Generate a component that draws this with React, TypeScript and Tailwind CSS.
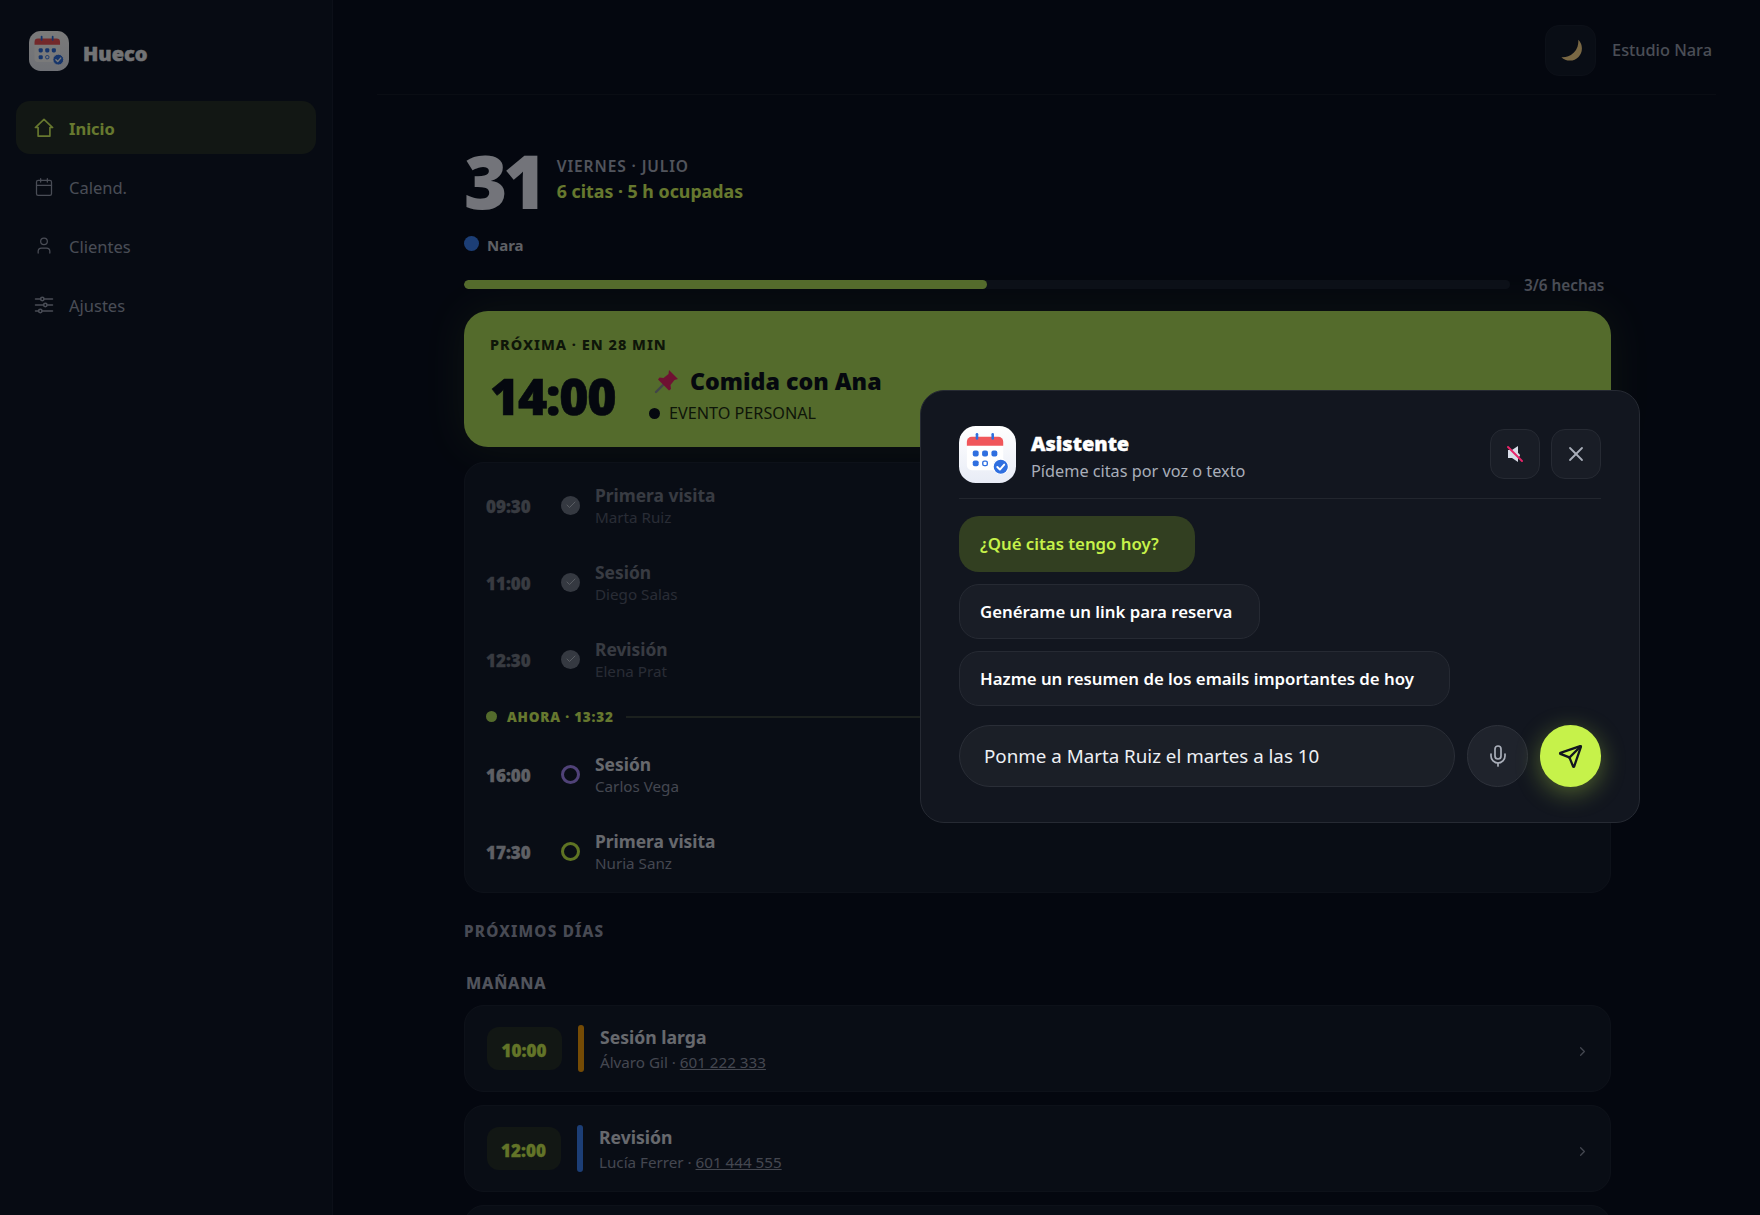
import React from "react";
import { Calendar, User, Mic, Send, X, ChevronRight, Check } from "lucide-react";

function AppIcon({ size }: { size: number }) {
  return (
    <svg width={size} height={size} viewBox="0 0 58 58" fill="none">
      <defs>
        <linearGradient id="ai" x1="0" y1="0" x2="0" y2="1">
          <stop offset="0" stopColor="#ffffff" />
          <stop offset="1" stopColor="#e8ecf6" />
        </linearGradient>
      </defs>
      <rect width="58" height="58" rx="17" fill="url(#ai)" />
      <rect x="8" y="11" width="37" height="34" rx="5" fill="#ffffff" />
      <path d="M8 20v-4a5 5 0 0 1 5-5h27a5 5 0 0 1 5 5v4z" fill="#f0565a" />
      <rect x="17" y="7" width="2.600" height="7" rx="1.300" fill="#2f6fe0" />
      <rect x="33" y="7" width="2.600" height="7" rx="1.300" fill="#2f6fe0" />
      <rect x="14" y="25" width="6" height="6" rx="2" fill="#2f6fe0" />
      <rect x="23.500" y="25" width="6" height="6" rx="2" fill="#2f6fe0" />
      <rect x="33" y="25" width="6" height="6" rx="2" fill="#2f6fe0" />
      <rect x="14" y="35" width="6" height="6" rx="2" fill="#2f6fe0" />
      <rect x="24.200" y="35.700" width="4.600" height="4.600" rx="1.500" stroke="#2f6fe0" strokeWidth="1.400" />
      <circle cx="42.500" cy="41.500" r="7.800" fill="#2f6fe0" stroke="#ffffff" strokeWidth="1.200" />
      <path d="M39 41.700l2.600 2.600 4.400-5" stroke="#fff" strokeWidth="2" strokeLinecap="round" strokeLinejoin="round" />
    </svg>
  );
}

function HomeIcon() {
  return (
    <svg width="22" height="22" viewBox="0 0 22 22" fill="none" stroke="currentColor" strokeWidth="1.800" strokeLinejoin="round" strokeLinecap="round">
      <path d="M1.500 10.500 11 1.500l9.500 9H17.500v9.500h-13v-9.500z" />
    </svg>
  );
}

function SlidersIcon() {
  return (
    <svg width="20" height="20" viewBox="0 0 20 20" fill="none" stroke="currentColor" strokeWidth="1.500" strokeLinecap="round">
      <path d="M1.500 4h5.200M10 4h8.500M1.500 10h8.200M13 10h5.500M1.500 16h3.200M8 16h10.500" />
      <circle cx="8.300" cy="4" r="1.700" />
      <circle cx="11.300" cy="10" r="1.700" />
      <circle cx="6.300" cy="16" r="1.700" />
    </svg>
  );
}

function NavItem({ icon, label, active }: { icon: React.ReactNode; label: string; active?: boolean }) {
  return (
    <div
      className={
        active
          ? "flex h-[53px] items-center gap-[15px] rounded-[14px] bg-[#26302a] pl-[18px] text-[#d8fb62] font-bold"
          : "flex h-[53px] items-center gap-[15px] rounded-[14px] pl-[18px] text-[#9aa1b3]"
      }
    >
      <span className="flex w-[20px] justify-center">{icon}</span>
      <span className="pt-[3px] text-[16.5px]">{label}</span>
    </div>
  );
}

function Row({ time, title, sub, done, ring }: { time: string; title: string; sub: string; done?: boolean; ring?: string }) {
  return (
    <div className="flex h-[77px] items-center">
      <span className={done ? "mt-[-2px] w-[75px] text-[17px] font-black text-[#757b88] [-webkit-text-stroke:0.3px_currentColor]" : "mt-[-2px] w-[75px] text-[17px] font-black text-[#c5c9d4] [-webkit-text-stroke:0.3px_currentColor]"}>{time}</span>
      {done ? (
        <span className="mt-[-5px] flex h-[19px] w-[19px] items-center justify-center rounded-full bg-[#6f7788] text-[#bcc3d0]">
          <Check size={12} strokeWidth={2} />
        </span>
      ) : (
        <span className={ring + " mt-[-5px] h-[19px] w-[19px] rounded-full border-[3px]"} />
      )}
      <div className="ml-[15px] mt-[-6px]">
        <div className={done ? "text-[17.4px] font-bold leading-[24px] text-[#767c8b]" : "text-[17.4px] font-bold leading-[24px] text-[#d8dbe4]"}>{title}</div>
        <div className={done ? "text-[15.2px] leading-[20px] text-[#565d70]" : "text-[15.2px] leading-[20px] text-[#8f95a8]"}>{sub}</div>
      </div>
    </div>
  );
}

function DayCard({ time, bar, title, name, phone, pill }: { time: string; bar: string; title: string; name: string; phone: string; pill: string }) {
  return (
    <div className="flex h-[87px] items-center rounded-[20px] border border-[#1d2536] bg-[#141c2d] pl-[22px] pr-[20px]">
      <span className={pill + " flex h-[43px] items-center justify-center rounded-[12px] bg-[#26302a] pr-[1px] pt-[4px] text-[17px] font-black text-[#d0f255] [-webkit-text-stroke:0.3px_currentColor]"}>{time}</span>
      <span className={bar + " ml-[16px] h-[47px] w-[6px] rounded-full"} />
      <div className="ml-[16px] flex-1">
        <div className="text-[17.6px] font-bold leading-[25px] text-[#d8dbe4]">{title}</div>
        <div className="mt-[1px] text-[15.2px] leading-[22px] text-[#8f95a8]">
          {name} · <span className="underline">{phone}</span>
        </div>
      </div>
      <ChevronRight size={15} className="mt-[5px] text-[#8f95a8]" />
    </div>
  );
}

export default function App() {
  return (
    <div className="relative flex h-screen w-full overflow-hidden bg-[#0a1020] font-['Noto_Sans','Open_Sans',sans-serif] text-white">
      <aside className="w-[333px] shrink-0 border-r border-[#192132] bg-[#0f1728] px-[16px]">
        <div className="flex h-[101px] items-center gap-[14px] pl-[13px]">
          <AppIcon size={40} />
          <span className="mt-[6px] text-[20px] font-black text-[#eef0f5] [-webkit-text-stroke:0.5px_currentColor]">Hueco</span>
        </div>
        <nav className="flex flex-col gap-[6px]">
          <NavItem active label="Inicio" icon={<HomeIcon />} />
          <NavItem label="Calend." icon={<Calendar size={22} strokeWidth={1.5} />} />
          <NavItem label="Clientes" icon={<User size={23} strokeWidth={1.5} />} />
          <NavItem label="Ajustes" icon={<SlidersIcon />} />
        </nav>
      </aside>

      <main className="min-w-0 flex-1 px-[44px]">
        <header className="flex h-[95px] items-center justify-end gap-[16px] border-b border-[#151c2b] pt-[6px] pr-[4px]">
          <span className="flex h-[51px] w-[51px] items-center justify-center rounded-[14px] border border-[#1a2232] bg-[#141c2d]">
            <svg width="24" height="24" viewBox="0 0 20 20">
              <path d="M16 1.500A10 10 0 0 1 2 16 13 13 0 0 0 16 1.500z" fill="#ffd98f" />
            </svg>
          </span>
          <span className="mt-[1px] text-[16.300px] font-medium text-[#9ca2b4]">Estudio Nara</span>
        </header>

        <div className="ml-[87px] w-[1147px]">
          <div className="box-content flex h-[95px] items-center pt-[40px]">
            <span className="mt-[-3px] text-[74px] font-black leading-none tracking-[-4px] text-[#f0f3ff]">31</span>
            <div className="ml-[14px] mt-[-8px]">
              <div className="text-[15.5px] font-semibold leading-[24px] tracking-[0.9px] text-[#aab0c0]">VIERNES · JULIO</div>
              <div className="text-[17.800px] font-bold leading-[26px] text-[#d8fb62]">6 citas · 5 h ocupadas</div>
            </div>
          </div>
          <div className="mt-[3px] flex h-[24px] items-center">
            <span className="mt-[-3px] h-[15px] w-[15px] rounded-full bg-[#3b82f6]" />
            <span className="ml-[8px] text-[15px] font-bold text-[#c5c9d4]">Nara</span>
          </div>
          <div className="mt-[23px] flex h-[9px] items-center">
            <div className="h-[9px] w-[1046px] overflow-hidden rounded-full bg-[#1a2333]">
              <div className="h-full w-[523px] rounded-full bg-[#afdf5c]" />
            </div>
            <span className="ml-[14px] mt-[2px] text-[15.300px] font-semibold text-[#9ca2b4]">3/6 hechas</span>
          </div>

          <section className="mt-[22px] h-[136px] rounded-[24px] bg-[#afdf5c] pl-[26px] pt-[22px] shadow-[0_0_40px_rgba(175,223,92,0.12)]">
            <div className="text-[14.5px] font-extrabold leading-[22px] tracking-[1px] text-[#1f2f14]">PRÓXIMA · EN 28 MIN</div>
            <div className="mt-[6px] flex">
              <span className="w-[125px] text-[50px] font-black leading-[70px] tracking-[-1.300px] text-[#0b1220] [-webkit-text-stroke:0.6px_currentColor]">14:00</span>
              <div className="ml-[34px] mt-[2px]">
                <div className="flex items-center">
                  <svg width="26" height="26" viewBox="0 0 26 26" className="ml-[5px]">
                    <path d="M2 24l9-9" stroke="#8a8f98" strokeWidth="2.400" strokeLinecap="round" />
                    <path d="M15 2l9 9-3.500 1-4 5 .5 4-2 1.500-11-11 1.500-2 4 .5 5-4z" fill="#e8256a" />
                  </svg>
                  <span className="ml-[10px] text-[23.200px] font-black leading-[36px] text-[#0b1220]">Comida con Ana</span>
                </div>
                <div className="mt-[1px] flex items-center">
                  <span className="h-[11px] w-[11px] rounded-full bg-[#0b1220]" />
                  <span className="ml-[9px] text-[16.200px] leading-[26px] text-[#1f2f14]">EVENTO PERSONAL</span>
                </div>
              </div>
            </div>
          </section>

          <section className="mt-[15px] h-[431px] rounded-[20px] border border-[#1d2536] bg-[#141c2d] pl-[21px] pt-[6px]">
            <Row done time="09:30" title="Primera visita" sub="Marta Ruiz" />
            <Row done time="11:00" title="Sesión" sub="Diego Salas" />
            <Row done time="12:30" title="Revisión" sub="Elena Prat" />
            <div className="mb-[4px] mt-[-1px] flex h-[35px] items-center pr-[21px]">
              <span className="h-[11px] w-[11px] rounded-full bg-[#afdf5c]" />
              <span className="ml-[10px] mt-[1px] text-[13.5px] font-black tracking-[0.8px] text-[#d8fb62]">AHORA · 13:32</span>
              <span className="ml-[12px] h-[2px] flex-1 bg-[#3a4340]" />
            </div>
            <Row time="16:00" title="Sesión" sub="Carlos Vega" ring="border-[#a78bfa]" />
            <Row time="17:30" title="Primera visita" sub="Nuria Sanz" ring="border-[#c6f24a]" />
          </section>

          <div className="mt-[26px] text-[15.3px] font-extrabold leading-[24px] tracking-[1.2px] text-[#969caf]">PRÓXIMOS DÍAS</div>
          <div className="ml-[2px] mt-[28px] text-[16px] font-extrabold leading-[24px] tracking-[0.8px] text-[#aab0c0]">MAÑANA</div>
          <div className="mt-[10px] flex flex-col gap-[13px]">
            <DayCard pill="w-[75px]" time="10:00" bar="bg-[#f59e0b]" title="Sesión larga" name="Álvaro Gil" phone="601 222 333" />
            <DayCard pill="w-[74px]" time="12:00" bar="bg-[#3b82f6]" title="Revisión" name="Lucía Ferrer" phone="601 444 555" />
            <div className="h-[87px] rounded-[20px] border border-[#1d2536] bg-[#141c2d]" />
          </div>
        </div>
      </main>

      <div className="absolute inset-0 bg-black/[.52]" />

      <div className="absolute bottom-[392px] right-[120px] w-[720px] rounded-[24px] border border-[#262a33] bg-[#12161f] px-[38px] pt-[34px]">
        <div className="flex h-[74px] items-start border-b border-[#22262e]">
          <div className="mt-[1px]">
            <AppIcon size={57} />
          </div>
          <div className="ml-[15px] mt-[5px]">
            <div className="text-[20px] font-black leading-[28px] text-white [-webkit-text-stroke:0.4px_currentColor]">Asistente</div>
            <div className="text-[16.250px] leading-[26px] text-[#a9aeb9]">Pídeme citas por voz o texto</div>
          </div>
          <div className="ml-auto mt-[4px] flex gap-[11px]">
            <span className="flex h-[50px] w-[50px] items-center justify-center rounded-[14px] border border-[#262a33] bg-[#191d26]">
              <svg width="20" height="20" viewBox="0 0 20 20">
                <path d="M3 6h4l6-4v16l-6-4H3z" fill="#d9dde8" />
                <path d="M13 9a3 3 0 0 1 2 2.500 3 3 0 0 1-2 2z" fill="#d9dde8" />
                <path d="M3 3l14 14" stroke="#e8256a" strokeWidth="2" strokeLinecap="round" />
              </svg>
            </span>
            <span className="flex h-[50px] w-[50px] items-center justify-center rounded-[14px] border border-[#262a33] bg-[#191d26] text-[#a9aeb9]">
              <X size={24} strokeWidth={1.800} />
            </span>
          </div>
        </div>
        <div className="mt-[17px] flex flex-col items-start gap-[12px]">
          <span className="flex h-[56px] w-[236px] items-center rounded-[20px] bg-[#323f21] pl-[21px] text-[16.800px] font-semibold text-[#c6f24a]">¿Qué citas tengo hoy?</span>
          <span className="flex h-[55px] w-[301px] items-center rounded-[20px] border border-[#262a33] bg-[#191d26] pl-[20px] text-[16.800px] font-semibold text-white">Genérame un link para reserva</span>
          <span className="flex h-[55px] w-[491px] items-center rounded-[20px] border border-[#262a33] bg-[#191d26] pl-[20px] text-[16.800px] font-semibold text-white">Hazme un resumen de los emails importantes de hoy</span>
        </div>
        <div className="mt-[19px] flex h-[97px] items-start gap-[12px]">
          <div className="flex h-[62px] flex-1 items-center rounded-full border border-[#2a2e37] bg-[#1b1f27] pl-[24px] text-[18.750px] text-[#eef0f4]">Ponme a Marta Ruiz el martes a las 10</div>
          <span className="flex h-[62px] w-[61px] items-center justify-center rounded-full border border-[#2e323b] bg-[#1f232c] text-[#a9aeb9]">
            <Mic size={24} strokeWidth={1.700} />
          </span>
          <span className="flex h-[62px] w-[61px] items-center justify-center rounded-full bg-[#c6f24a] text-[#12161f] shadow-[0_6px_24px_rgba(198,242,74,0.35)]">
            <Send size={25} strokeWidth={2.200} />
          </span>
        </div>
      </div>
    </div>
  );
}
